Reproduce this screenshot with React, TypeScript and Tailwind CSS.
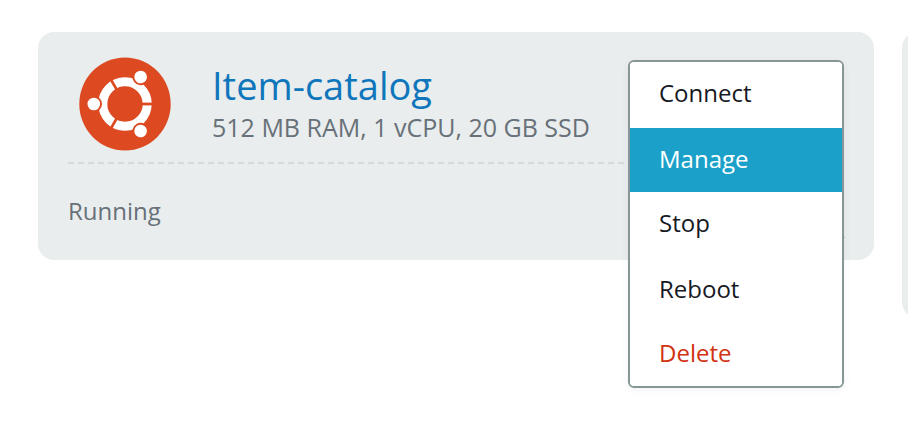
const actions = [
  { label: 'Connect', tone: 'text-[#16191f] bg-white' },
  { label: 'Manage', tone: 'text-white bg-[#1ba1c9]' },
  { label: 'Stop', tone: 'text-[#16191f] bg-white' },
  { label: 'Reboot', tone: 'text-[#16191f] bg-white' },
  { label: 'Delete', tone: 'text-[#d13212] bg-white' },
];

function UbuntuLogo() {
  return (
    <svg viewBox="0 0 92 94" className="h-[94px] w-[92px] shrink-0" role="img" aria-label="Ubuntu">
      <ellipse cx="46" cy="47" rx="45.7" ry="46.5" fill="#dd4a22" />
      <circle cx="46" cy="47" r="22.2" fill="none" stroke="#fff" strokeWidth="9" />
      {[0, 120, 240].map((angle) => (
        <g key={angle} transform={`rotate(${angle} 46 47)`}>
          <path d="M60 47H75" stroke="#dd4a22" strokeWidth="2.8" />
          <circle cx="14.8" cy="47" r="8.2" fill="#dd4a22" />
          <circle cx="14.8" cy="47" r="6.3" fill="#fff" />
        </g>
      ))}
    </svg>
  );
}

function ActionMenu() {
  return (
    <div
      role="menu"
      className="absolute top-7 right-[30px] flex w-[216px] flex-col overflow-hidden rounded-md border-2 border-[#879596] bg-white shadow-[0_2px_10px_rgba(0,0,0,0.05)]"
    >
      {actions.map(({ label, tone }) => (
        <button
          key={label}
          type="button"
          role="menuitem"
          className={`h-16 px-[29px] pb-0.5 text-left text-[24px] leading-8 even:mt-0.5 ${tone}`}
        >
          {label}
        </button>
      ))}
    </div>
  );
}

export default function App() {
  return (
    <main className="flex items-start gap-7 overflow-hidden bg-white pt-8 pb-30 pl-[38px] font-['Open_Sans','Noto_Sans',sans-serif]">
      <section className="relative min-w-0 flex-1 rounded-2xl bg-[#e9eded] px-[30px] pt-[25px]">
        <header className="flex gap-[41px] border-b-2 border-dashed border-[#d5dbdb] pb-[11px] pl-[11px]">
          <UbuntuLogo />
          <div className="whitespace-nowrap">
            <h2 className="pt-0.5 text-[38px] leading-[52px]">
              <a href="#item-catalog" className="text-[#1076bc]">Item-catalog</a>
            </h2>
            <p className="text-[25px] leading-8 text-[#687078]">512 MB RAM, 1 vCPU, 20 GB SSD</p>
          </div>
        </header>
        <p className="pt-[31px] pb-[33px] text-[24px] leading-8 text-[#687078]">Running</p>
        <span className="absolute right-[29px] bottom-[22px] size-px bg-[#aab7b8]" />
        <ActionMenu />
      </section>
      <div className="w-1.5 shrink-0 overflow-hidden">
        <section className="h-[286px] w-96 rounded-2xl bg-[#e9eded]" />
      </div>
    </main>
  );
}
